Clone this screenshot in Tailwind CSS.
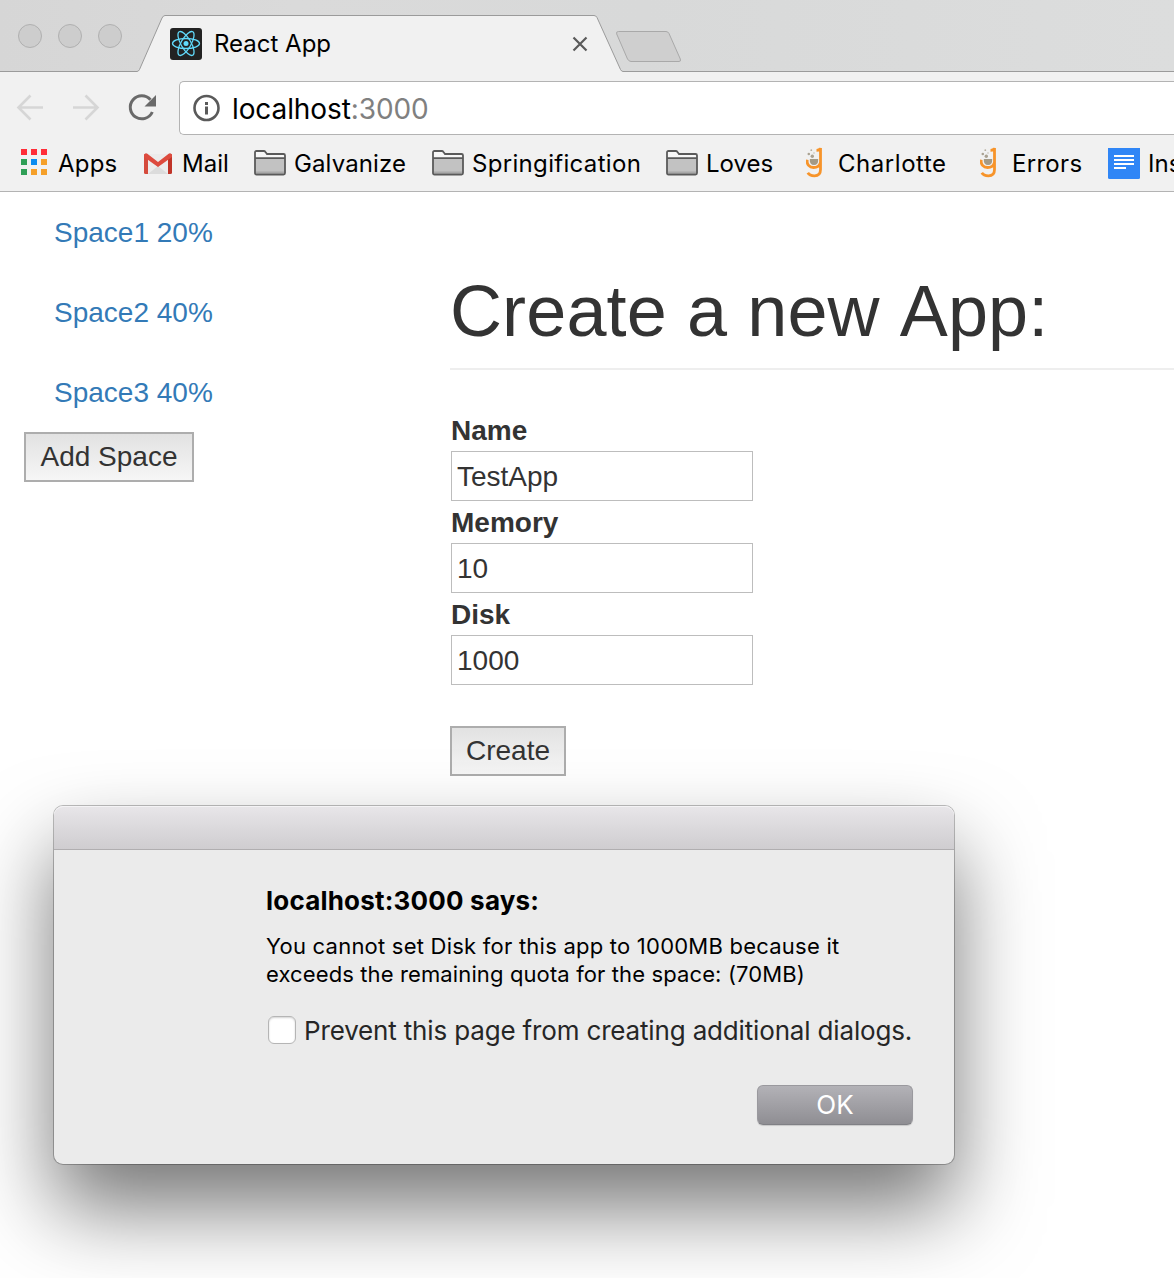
<!DOCTYPE html>
<html lang="en">
<head>
<meta charset="utf-8">
<title>React App</title>
<script src="https://cdn.jsdelivr.net/npm/@tailwindcss/browser@4"></script>
</head>
<body class="w-[1174px] h-[1278px] overflow-hidden relative bg-white font-['Liberation_Sans',Arial,sans-serif] text-[28px] text-[#333]">
<svg class="hidden">
  <symbol id="folder" viewBox="0 0 32 26">
    <path d="M1 22.500V3Q1 1 3 1H9.500Q10.800 1 11.500 2L13 4H29.500Q31 4 31 5.500V8.200H1Z" fill="#f7f7f7"/>
    <path d="M1 8.200H31V24.500H1Z" fill="#c2c2c2"/>
    <path d="M2 21.500H30V23H2Z" fill="#a9a9a9"/>
    <path d="M1 8.200H31M1 23V2.500Q1 1 2.500 1H9.800Q10.800 1 11.500 2L13 4H29.500Q31 4 31 5.500V23Q31 24.500 29.500 24.500H2.500Q1 24.500 1 23Z" fill="none" stroke="#5a5a5a" stroke-width="1.800"/>
  </symbol>
  <symbol id="gee" viewBox="0 0 18 32">
    <path d="M1.200 12.800C.5 17.500 3.500 20.500 7.500 20.500C11 20.500 13.500 19 14.200 16M10.500 3.300Q14.200 3.300 14.500 1V22.500Q14.500 28.800 8.500 28.800Q3.500 28.800 1.800 25.800" fill="none" stroke="#f7942a" stroke-width="2.800"/>
    <path d="M3.800 12H12.200Q12.500 18 8 18Q3.500 18 3.800 12Z" fill="#a39a86"/>
    <circle cx="6.300" cy="9.200" r="1.700" fill="#aaa292"/><circle cx="2.800" cy="7" r="1.300" fill="#aaa292"/><circle cx="5.300" cy="3.200" r=".9" fill="#b5ae9f"/><circle cx="8" cy="6" r=".8" fill="#c5bfb3"/>
  </symbol>
</svg>

<header class="h-48 overflow-hidden bg-[#f1f1f1] border-b border-[#b3b3b3] text-black font-[Inter,sans-serif]">
  <div class="h-[72px] relative">
    <svg class="absolute inset-0" width="1174" height="72">
      <defs><linearGradient id="strip"><stop offset="0" stop-color="#d6d6d6"/><stop offset=".25" stop-color="#dadada"/><stop offset=".55" stop-color="#d8d9d9"/><stop offset="1" stop-color="#dcdddd"/></linearGradient></defs>
      <rect width="1174" height="71.500" fill="url(#strip)"/>
      <path d="M0 71.500H137Q138.500 71.500 139.500 69.500L162 18Q163.300 15.500 165 15.500H594Q596 15.500 597 17.500L620.500 69.500Q621.500 71.500 623 71.500H1174V73H0Z" fill="#f1f1f1" stroke="#9b9b9b"/>
      <path d="M618.500 31.500H666Q668 31.500 669 33.500L680.300 59Q681.300 61.500 679 61.500H631Q629 61.500 627.500 59L616.700 34Q615.800 31.500 618.500 31.500Z" fill="#cfcfcf" stroke="#a9a9a9"/>
      <g fill="#cdcdcd" stroke="#b0b0b0"><circle cx="30" cy="36" r="11.500"/><circle cx="70" cy="36" r="11.500"/><circle cx="110" cy="36" r="11.500"/></g>
    </svg>
    <div class="relative flex items-center pl-[170px] pt-7 h-[60px]">
      <svg class="shrink-0" width="32" height="32" viewBox="0 0 32 32"><rect width="32" height="32" rx="3" fill="#222"/><g fill="none" stroke="#61dafb" stroke-width="1.300"><ellipse cx="16" cy="15.500" rx="13.500" ry="5"/><ellipse cx="16" cy="15.500" rx="13.500" ry="5" transform="rotate(60 16 15.500)"/><ellipse cx="16" cy="15.500" rx="13.500" ry="5" transform="rotate(120 16 15.500)"/></g><circle cx="16" cy="15.500" r="2.500" fill="#61dafb"/></svg>
      <span class="ml-3 w-[358px] shrink-0 text-2xl leading-8">React App</span>
      <svg class="shrink-0" width="16" height="16" viewBox="0 0 16 16"><path d="M1.500 1.500L14.500 14.500M14.500 1.500L1.500 14.500" stroke="#5a5a5a" stroke-width="2.200"/></svg>
    </div>
  </div>
  <div class="h-[72px] flex items-start">
    <svg class="mt-2 shrink-0" width="179" height="56" viewBox="0 80 179 56">
      <g fill="none" stroke="#d6d6d6" stroke-width="2.600"><path d="M43 107.500H19M30.500 95.500L18.500 107.500L30.500 119.500"/><path d="M73 107.500H97M85.500 95.500L97.500 107.500L85.500 119.500"/></g>
      <path d="M152.300 112A11.500 11.500 0 1 1 150.500 99.800" fill="none" stroke="#6a6a6a" stroke-width="3"/><path d="M156 95V106.500H144.500Z" fill="#6a6a6a"/>
    </svg>
    <div class="mt-[9px] h-[54px] flex-1 bg-white border border-r-0 border-[#b3b3b3] rounded-l-[5px] flex items-center pl-3">
      <svg class="shrink-0" width="28" height="28" viewBox="0 0 28 28"><circle cx="14.500" cy="14" r="12" fill="none" stroke="#5a5a5a" stroke-width="2.600"/><path d="M13 8H16V11H13ZM13 12.500H16V20.500H13Z" fill="#5a5a5a"/></svg>
      <span class="ml-3 pt-0.5 text-[28px] leading-8 tracking-[-0.1px]">localhost<span class="text-[#808080]">:3000</span></span>
    </div>
  </div>
  <nav class="h-[39px] flex items-center pl-[21px] text-2xl leading-8 whitespace-nowrap">
    <div class="w-[123px] shrink-0 flex items-center"><svg class="mr-[11px] -mt-1" width="26" height="26"><path d="M0 0H6V6H0ZM10 0H16V6H10ZM20 0H26V6H20Z" fill="#ff2d37"/><path d="M0 10H6V16H0ZM0 20H6V26H0Z" fill="#2f9f57"/><path d="M10 10H16V16H10Z" fill="#0a8cf0"/><path d="M20 10H26V16H20ZM10 20H16V26H10ZM20 20H26V26H20Z" fill="#f5a02a"/></svg><span class="tracking-[0.2px]">Apps</span></div>
    <div class="w-[110px] shrink-0 flex items-center"><svg class="mr-2.5" width="28" height="22" viewBox="0 0 28 22"><path d="M2 1H26V21H2Z" fill="#ececec"/><path d="M4 21L14 13L24 21Z" fill="#dcdcdc"/><path d="M0 2Q0 .5 2 .5L4 2V21H1.500Q0 21 0 19.500Z" fill="#d54b3d"/><path d="M28 2Q28 .5 26 .5L24 2V21H26.500Q28 21 28 19.500Z" fill="#c03428"/><path d="M0 2Q.5 0 3 .5L14 9L25 .5Q27.500 0 28 2V4L14 14L0 4Z" fill="#dd4b3e"/></svg><span>Mail</span></div>
    <div class="w-[178px] shrink-0 flex items-center"><svg class="mr-2 -mt-0.5" width="32" height="26"><use href="#folder"/></svg><span class="tracking-[0.12px]">Galvanize</span></div>
    <div class="w-[234px] shrink-0 flex items-center"><svg class="mr-2 -mt-0.5" width="32" height="26"><use href="#folder"/></svg><span class="tracking-[0.32px]">Springification</span></div>
    <div class="w-[140px] shrink-0 flex items-center"><svg class="mr-2 -mt-0.5" width="32" height="26"><use href="#folder"/></svg><span>Loves</span></div>
    <div class="w-[174px] shrink-0 flex items-center"><svg class="mr-3.5 -mt-0.5" width="18" height="32"><use href="#gee"/></svg><span class="tracking-[0.55px]">Charlotte</span></div>
    <div class="w-[128px] shrink-0 flex items-center"><svg class="mr-3.5 -mt-0.5" width="18" height="32"><use href="#gee"/></svg><span class="tracking-[0.3px]">Errors</span></div>
    <div class="w-[66px] shrink-0 overflow-hidden flex items-center"><svg class="mr-2 shrink-0 -mt-0.5" width="32" height="32"><rect width="32" height="32" rx="1.500" fill="#3086f6"/><path d="M6 9H26M6 13H26M6 17H26M6 21H18" stroke="#fff" stroke-width="2"/></svg><span>Ins</span></div>
  </nav>
</header>

<main class="flex items-start">
  <aside class="w-[450px] shrink-0 pl-6 pt-[21px]">
    <ul class="pl-[30px] text-[#337ab7] leading-10">
      <li class="h-20">Space1 20%</li>
      <li class="h-20">Space2 40%</li>
      <li class="h-[59px]">Space3 40%</li>
    </ul>
    <button class="block w-[170px] h-[50px] border-2 border-[#adadad] bg-linear-to-b from-[#e2e2e2] to-[#f6f6f6] leading-10">Add Space</button>
  </aside>
  <section class="w-[724px] shrink-0">
    <h1 class="mt-20 h-[98px] border-b-2 border-[#eee] text-[72px] leading-[79px] whitespace-nowrap tracking-[0.12px] [font-kerning:none]">Create a new App:</h1>
    <form class="pt-10 pl-px font-normal leading-10">
      <label class="block h-[41px] pt-px font-bold">Name</label>
      <input class="block w-[302px] h-[50px] mb-px border border-[#bdbdbd] bg-white pl-[5px] pt-0.5" value="TestApp">
      <label class="block h-[41px] pt-px font-bold">Memory</label>
      <input class="block w-[302px] h-[50px] mb-px border border-[#bdbdbd] bg-white pl-[5px] pt-0.5" value="10">
      <label class="block h-[41px] pt-px font-bold">Disk</label>
      <input class="block w-[302px] h-[50px] border border-[#bdbdbd] bg-white pl-[5px] pt-0.5" value="1000">
      <button type="button" class="block mt-[41px] -ml-px w-[116px] h-[50px] border-2 border-[#adadad] bg-linear-to-b from-[#e2e2e2] to-[#f6f6f6]">Create</button>
    </form>
  </section>
</main>

<div role="dialog" class="absolute left-[54px] top-[806px] w-[900px] h-[358px] rounded-[9px] bg-[#ebebeb] font-[Inter,sans-serif] text-black shadow-[0_0_0_1px_rgba(0,0,0,0.25),0_44px_84px_rgba(0,0,0,0.54)]">
  <div class="h-11 rounded-t-[9px] border-b border-[#b0aeb0] bg-linear-to-b from-[#e8e6e9] to-[#cfcdd0] shadow-[inset_0_1px_0_#f4f3f5]"></div>
  <div class="pl-[212px] pr-[41px] pt-[35px]">
    <h2 class="text-[26px] leading-8 font-bold whitespace-nowrap tracking-[0.2px]">localhost:3000 says:</h2>
    <p class="mt-[15px] text-[22px] leading-7 whitespace-nowrap"><span class="tracking-[0.23px]">You cannot set Disk for this app to 1000MB because it</span><br><span class="tracking-[0.12px]">exceeds the remaining quota for the space: (70MB)</span></p>
    <label class="mt-[25px] flex items-center pl-0.5 text-[26px] leading-8 text-[#262626] whitespace-nowrap"><span class="mr-2 size-7 shrink-0 rounded-[6px] border border-[#b5b5b5] bg-white shadow-[inset_0_1px_2px_rgba(0,0,0,0.18)]"></span><span class="pt-0.5 tracking-[-0.16px]">Prevent this page from creating additional dialogs.</span></label>
    <button class="mt-[38px] ml-auto block w-[156px] h-10 rounded-[6px] border border-[#9a999e] border-b-[#808085] bg-linear-to-b from-[#b3b2b7] to-[#8f8e93] text-[26px] leading-9 text-white shadow-[0_1px_1px_rgba(0,0,0,0.15)]">OK</button>
  </div>
</div>
</body>
</html>
